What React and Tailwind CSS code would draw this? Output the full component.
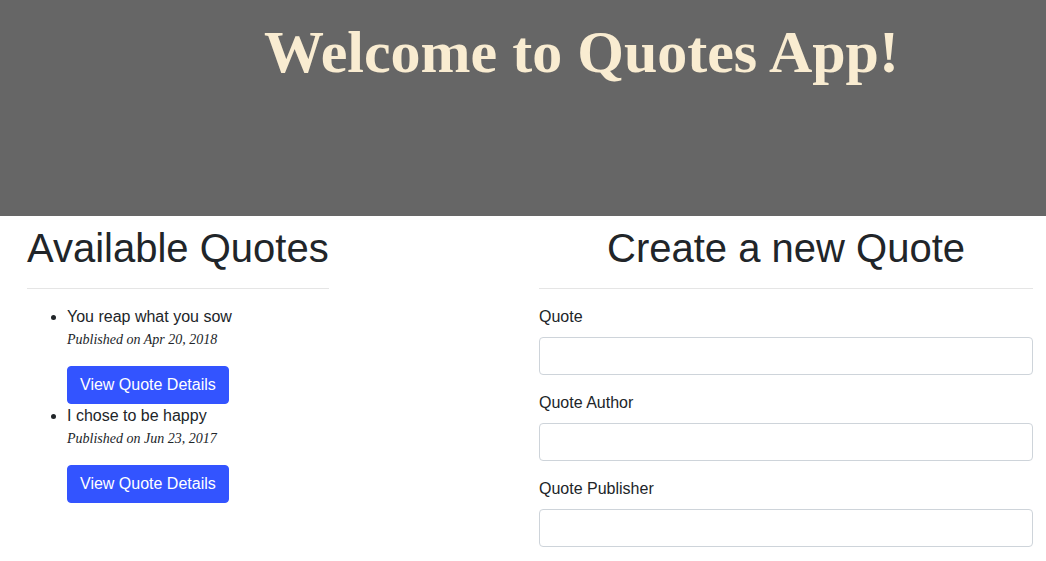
export default function App() {
  const quotes = [
    { text: "You reap what you sow", date: "Apr 20, 2018" },
    { text: "I chose to be happy", date: "Jun 23, 2017" },
  ];
  const fields = ["Quote", "Quote Author", "Quote Publisher"];
  return (
    <div className="min-h-[561px] bg-white text-[#212529] font-['Liberation_Sans',Arial,sans-serif] text-[16px] leading-[24px]">
      <header className="h-[216px] bg-[#666666] pt-[16px]">
        <h1 className="pl-[264px] font-['Liberation_Serif','Times_New_Roman',serif] font-bold text-[60px] leading-[72px] text-[#f9ecd1]">
          Welcome to Quotes App!
        </h1>
      </header>
      <main className="flex pl-[27px] pt-[8px]">
        <section className="w-[512px] shrink-0">
          <div className="w-fit">
            <h2 className="text-[40px] leading-[48px] font-normal">Available Quotes</h2>
            <hr className="mt-[16px] mb-[16px] border-0 border-t border-[#e5e5e5]" />
          </div>
          <ul className="list-disc pl-[40px]">
            {quotes.map((q) => (
              <li key={q.text}>
                <div>{q.text}</div>
                <div className="font-['Liberation_Serif','Times_New_Roman',serif] italic text-[14px] leading-[22px]">
                  Published on {q.date}
                </div>
                <button className="mt-[15px] rounded-[4px] border border-[#3354ff] bg-[#3354ff] px-[12px] py-[6px] text-white text-[16px] leading-[24px]">
                  View Quote Details
                </button>
              </li>
            ))}
          </ul>
        </section>
        <section className="w-[494px] shrink-0">
          <h2 className="text-center text-[40px] leading-[48px] font-normal">Create a new Quote</h2>
          <hr className="mt-[16px] mb-[16px] border-0 border-t border-[#e5e5e5]" />
          <form>
            {fields.map((f) => (
              <div key={f} className="mb-[16px]">
                <label className="block mb-[8px]">{f}</label>
                <input
                  type="text"
                  className="block w-full h-[38px] rounded-[4px] border border-[#ced4da] bg-white px-[12px]"
                />
              </div>
            ))}
          </form>
        </section>
      </main>
    </div>
  );
}
